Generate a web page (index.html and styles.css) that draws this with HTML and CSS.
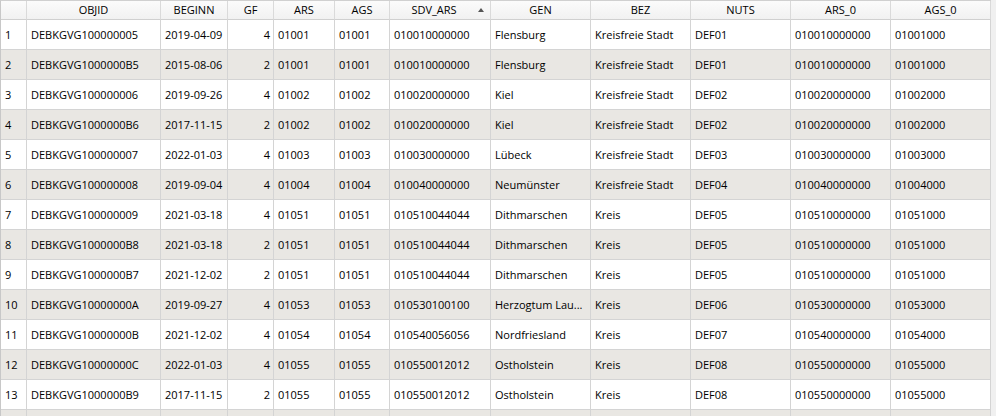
FILE: index.html
```html
<!DOCTYPE html>
<html>
<head>
<meta charset="utf-8">
<link rel="stylesheet" href="styles.css">
</head>
<body>
<div class="grid">
  <div class="row head">
    <div class="c corner"></div>
    <div class="c">OBJID</div>
    <div class="c">BEGINN</div>
    <div class="c">GF</div>
    <div class="c">ARS</div>
    <div class="c">AGS</div>
    <div class="c sorted">SDV_ARS<span class="arrow"></span></div>
    <div class="c">GEN</div>
    <div class="c">BEZ</div>
    <div class="c">NUTS</div>
    <div class="c">ARS_0</div>
    <div class="c">AGS_0</div>
  </div>
  <div class="rows">
    <div class="row"><div class="c rh">1</div><div class="c">DEBKGVG100000005</div><div class="c">2019-04-09</div><div class="c num">4</div><div class="c">01001</div><div class="c">01001</div><div class="c">010010000000</div><div class="c">Flensburg</div><div class="c">Kreisfreie Stadt</div><div class="c">DEF01</div><div class="c">010010000000</div><div class="c">01001000</div></div>
    <div class="row"><div class="c rh">2</div><div class="c">DEBKGVG1000000B5</div><div class="c">2015-08-06</div><div class="c num">2</div><div class="c">01001</div><div class="c">01001</div><div class="c">010010000000</div><div class="c">Flensburg</div><div class="c">Kreisfreie Stadt</div><div class="c">DEF01</div><div class="c">010010000000</div><div class="c">01001000</div></div>
    <div class="row"><div class="c rh">3</div><div class="c">DEBKGVG100000006</div><div class="c">2019-09-26</div><div class="c num">4</div><div class="c">01002</div><div class="c">01002</div><div class="c">010020000000</div><div class="c">Kiel</div><div class="c">Kreisfreie Stadt</div><div class="c">DEF02</div><div class="c">010020000000</div><div class="c">01002000</div></div>
    <div class="row"><div class="c rh">4</div><div class="c">DEBKGVG1000000B6</div><div class="c">2017-11-15</div><div class="c num">2</div><div class="c">01002</div><div class="c">01002</div><div class="c">010020000000</div><div class="c">Kiel</div><div class="c">Kreisfreie Stadt</div><div class="c">DEF02</div><div class="c">010020000000</div><div class="c">01002000</div></div>
    <div class="row"><div class="c rh">5</div><div class="c">DEBKGVG100000007</div><div class="c">2022-01-03</div><div class="c num">4</div><div class="c">01003</div><div class="c">01003</div><div class="c">010030000000</div><div class="c">Lübeck</div><div class="c">Kreisfreie Stadt</div><div class="c">DEF03</div><div class="c">010030000000</div><div class="c">01003000</div></div>
    <div class="row"><div class="c rh">6</div><div class="c">DEBKGVG100000008</div><div class="c">2019-09-04</div><div class="c num">4</div><div class="c">01004</div><div class="c">01004</div><div class="c">010040000000</div><div class="c">Neumünster</div><div class="c">Kreisfreie Stadt</div><div class="c">DEF04</div><div class="c">010040000000</div><div class="c">01004000</div></div>
    <div class="row"><div class="c rh">7</div><div class="c">DEBKGVG100000009</div><div class="c">2021-03-18</div><div class="c num">4</div><div class="c">01051</div><div class="c">01051</div><div class="c">010510044044</div><div class="c">Dithmarschen</div><div class="c">Kreis</div><div class="c">DEF05</div><div class="c">010510000000</div><div class="c">01051000</div></div>
    <div class="row"><div class="c rh">8</div><div class="c">DEBKGVG1000000B8</div><div class="c">2021-03-18</div><div class="c num">2</div><div class="c">01051</div><div class="c">01051</div><div class="c">010510044044</div><div class="c">Dithmarschen</div><div class="c">Kreis</div><div class="c">DEF05</div><div class="c">010510000000</div><div class="c">01051000</div></div>
    <div class="row"><div class="c rh">9</div><div class="c">DEBKGVG1000000B7</div><div class="c">2021-12-02</div><div class="c num">2</div><div class="c">01051</div><div class="c">01051</div><div class="c">010510044044</div><div class="c">Dithmarschen</div><div class="c">Kreis</div><div class="c">DEF05</div><div class="c">010510000000</div><div class="c">01051000</div></div>
    <div class="row"><div class="c rh">10</div><div class="c">DEBKGVG10000000A</div><div class="c">2019-09-27</div><div class="c num">4</div><div class="c">01053</div><div class="c">01053</div><div class="c">010530100100</div><div class="c">Herzogtum Lau...</div><div class="c">Kreis</div><div class="c">DEF06</div><div class="c">010530000000</div><div class="c">01053000</div></div>
    <div class="row"><div class="c rh">11</div><div class="c">DEBKGVG10000000B</div><div class="c">2021-12-02</div><div class="c num">4</div><div class="c">01054</div><div class="c">01054</div><div class="c">010540056056</div><div class="c">Nordfriesland</div><div class="c">Kreis</div><div class="c">DEF07</div><div class="c">010540000000</div><div class="c">01054000</div></div>
    <div class="row"><div class="c rh">12</div><div class="c">DEBKGVG10000000C</div><div class="c">2022-01-03</div><div class="c num">4</div><div class="c">01055</div><div class="c">01055</div><div class="c">010550012012</div><div class="c">Ostholstein</div><div class="c">Kreis</div><div class="c">DEF08</div><div class="c">010550000000</div><div class="c">01055000</div></div>
    <div class="row"><div class="c rh">13</div><div class="c">DEBKGVG1000000B9</div><div class="c">2017-11-15</div><div class="c num">2</div><div class="c">01055</div><div class="c">01055</div><div class="c">010550012012</div><div class="c">Ostholstein</div><div class="c">Kreis</div><div class="c">DEF08</div><div class="c">010550000000</div><div class="c">01055000</div></div>
    <div class="row"><div class="c rh"></div><div class="c"></div><div class="c"></div><div class="c num"></div><div class="c"></div><div class="c"></div><div class="c"></div><div class="c"></div><div class="c"></div><div class="c"></div><div class="c"></div><div class="c"></div></div>
  </div>
</div>
</body>
</html>
```
FILE: styles.css
```css
html, body {
  margin: 0;
  padding: 0;
  background: #f0f0f0;
  overflow: hidden;
  height: 416px;
}
body {
  font-family: "Open Sans", "Noto Sans", sans-serif;
  font-size: 11px;
  color: #000;
}
.grid {
  width: 991px;
  border-left: 1px solid #c8c8c8;
  border-top: 1px solid #d0d0d0;
  box-sizing: border-box;
  display: flex;
  flex-direction: column;
}
.row {
  display: grid;
  grid-template-columns: 26px 134px 67px 46px 61px 55px 101px 100px 100px 100px 100px 100px;
  height: 30px;
  background: #ffffff;
}
.rows .row:nth-child(even) {
  background: #e9e7e3;
}
.c {
  box-sizing: border-box;
  border-right: 1px solid #d4d4d4;
  border-bottom: 1px solid #d4d4d4;
  padding: 0 3px 0 4px;
  display: flex;
  align-items: center;
  white-space: nowrap;
  overflow: hidden;
}
.num {
  justify-content: flex-end;
}
.rh {
  padding-left: 4px;
}
.head {
  height: 19px;
  background: linear-gradient(#fbfbfb, #f1f1f1);
}
.head .c {
  justify-content: center;
  padding: 0 0 1px 0;
  border-right-color: #dadada;
  border-bottom-color: #d0d0d0;
}
.head .sorted {
  position: relative;
  padding-right: 12px;
}
.arrow {
  position: absolute;
  right: 6px;
  top: 7px;
  width: 0;
  height: 0;
  border-left: 3.5px solid transparent;
  border-right: 3.5px solid transparent;
  border-bottom: 4px solid #555;
}
```
